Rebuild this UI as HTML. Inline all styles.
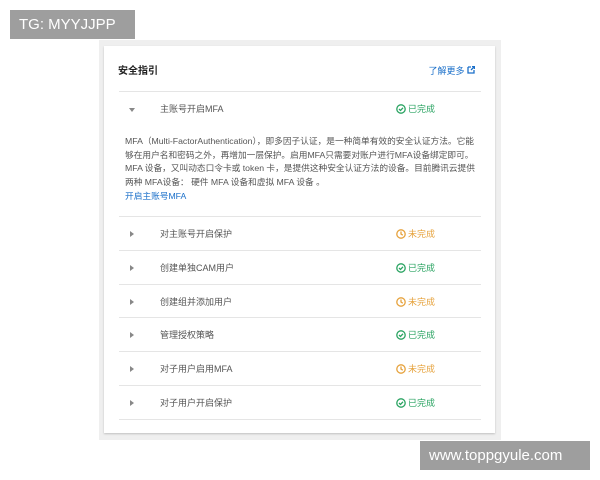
<!DOCTYPE html><html><head><meta charset="utf-8"><style>
body{margin:0;width:600px;height:480px;background:#fff;font-family:"Liberation Sans","Noto Sans CJK SC",sans-serif;position:relative;overflow:hidden}
.wm{position:absolute;background:#9e9e9e;color:#fff;font-size:15px;line-height:29px;padding:0 9px}
.frame{position:absolute;left:99px;top:40px;width:402px;height:400px;background:#efefef}
.card{position:absolute;left:104px;top:46px;width:391px;height:387px;background:#fff;box-shadow:0 1px 2px rgba(0,0,0,.2)}
.t{position:absolute;left:14px;top:16px;font-size:10px;font-weight:bold;color:#222}
.more{position:absolute;right:20px;top:18px;font-size:9px;color:#1a6fc9}
.row{position:absolute;left:15px;width:362px;height:33px;border-top:1px solid #e5e5e5;font-size:9px;color:#555}
.row .a{position:absolute;left:11px;top:14px;width:0;height:0;border-left:4px solid #888;border-top:3px solid transparent;border-bottom:3px solid transparent}
.row .a.d{border-top:4px solid #888;border-left:3px solid transparent;border-right:3px solid transparent;border-bottom:0;left:10px;top:16px}
.row .l{position:absolute;left:41px;top:10px}
.row .s{position:absolute;left:277px;top:10px}
.ok{color:#29a361}.no{color:#e6a23c}
.s svg{vertical-align:-2px;margin-right:2px}
.desc{position:absolute;left:21px;top:89px;width:352px;font-size:8.7px;line-height:13.6px;color:#555}
.desc a{color:#1a6fc9;display:block;margin-top:1px}
.bot{position:absolute;left:15px;top:373px;width:362px;border-top:1px solid #e5e5e5}
</style></head><body>
<div class="wm" style="left:10px;top:10px;width:107px">TG: MYYJJPP</div>
<div class="frame"></div>
<div class="card">
<div class="t">安全指引</div>
<div class="more">了解更多 <svg width="8" height="8" viewBox="0 0 8 8"><path d="M1 1h3M1 1v6h6V4M4 4l3.5-3.5M5 0.5h2.5V3" stroke="#1a6fc9" stroke-width="1.3" fill="none"/></svg></div>
<div class="row" style="top:45px"><i class="a d"></i><span class="l">主账号开启MFA</span><span class="s ok"><svg width="10" height="10" viewBox="0 0 10 10"><circle cx="5" cy="5" r="4.2" stroke="#29a361" stroke-width="1.3" fill="none"/><path d="M3 5l1.5 1.5L7 3.8" stroke="#29a361" stroke-width="1.3" fill="none"/></svg>已完成</span></div>
<div class="desc">MFA（Multi-FactorAuthentication），即多因子认证，是一种简单有效的安全认证方法。它能够在用户名和密码之外，再增加一层保护。启用MFA只需要对账户进行MFA设备绑定即可。MFA 设备，又叫动态口令卡或 token 卡，是提供这种安全认证方法的设备。目前腾讯云提供两种 MFA设备： 硬件 MFA 设备和虚拟 MFA 设备 。<a>开启主账号MFA</a></div>
<div class="row" style="top:170px"><i class="a"></i><span class="l">对主账号开启保护</span><span class="s no"><svg width="10" height="10" viewBox="0 0 10 10"><circle cx="5" cy="5" r="4.2" stroke="#e6a23c" stroke-width="1.3" fill="none"/><path d="M5 2.5V5l1.8 1.2" stroke="#e6a23c" stroke-width="1.3" fill="none"/></svg>未完成</span></div>
<div class="row" style="top:204px"><i class="a"></i><span class="l">创建单独CAM用户</span><span class="s ok"><svg width="10" height="10" viewBox="0 0 10 10"><circle cx="5" cy="5" r="4.2" stroke="#29a361" stroke-width="1.3" fill="none"/><path d="M3 5l1.5 1.5L7 3.8" stroke="#29a361" stroke-width="1.3" fill="none"/></svg>已完成</span></div>
<div class="row" style="top:238px"><i class="a"></i><span class="l">创建组并添加用户</span><span class="s no"><svg width="10" height="10" viewBox="0 0 10 10"><circle cx="5" cy="5" r="4.2" stroke="#e6a23c" stroke-width="1.3" fill="none"/><path d="M5 2.5V5l1.8 1.2" stroke="#e6a23c" stroke-width="1.3" fill="none"/></svg>未完成</span></div>
<div class="row" style="top:271px"><i class="a"></i><span class="l">管理授权策略</span><span class="s ok"><svg width="10" height="10" viewBox="0 0 10 10"><circle cx="5" cy="5" r="4.2" stroke="#29a361" stroke-width="1.3" fill="none"/><path d="M3 5l1.5 1.5L7 3.8" stroke="#29a361" stroke-width="1.3" fill="none"/></svg>已完成</span></div>
<div class="row" style="top:305px"><i class="a"></i><span class="l">对子用户启用MFA</span><span class="s no"><svg width="10" height="10" viewBox="0 0 10 10"><circle cx="5" cy="5" r="4.2" stroke="#e6a23c" stroke-width="1.3" fill="none"/><path d="M5 2.5V5l1.8 1.2" stroke="#e6a23c" stroke-width="1.3" fill="none"/></svg>未完成</span></div>
<div class="row" style="top:339px"><i class="a"></i><span class="l">对子用户开启保护</span><span class="s ok"><svg width="10" height="10" viewBox="0 0 10 10"><circle cx="5" cy="5" r="4.2" stroke="#29a361" stroke-width="1.3" fill="none"/><path d="M3 5l1.5 1.5L7 3.8" stroke="#29a361" stroke-width="1.3" fill="none"/></svg>已完成</span></div>
<div class="bot"></div>
</div>
<div class="wm" style="left:420px;top:441px;width:152px">www.toppgyule.com</div>
</body></html>
